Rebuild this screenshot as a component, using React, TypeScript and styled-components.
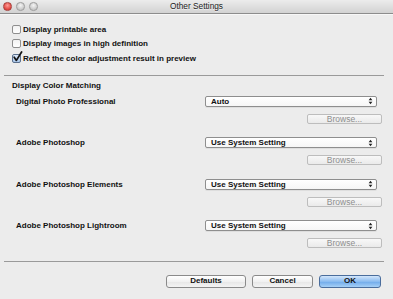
import styled, { createGlobalStyle } from "styled-components";

const GlobalStyle = createGlobalStyle`
    html, body {
        margin: 0;
        padding: 0;
        background: #ececec;
    }
    body {
        font-family: "Liberation Sans", Arial, sans-serif;
        color: #111;
    }
`;

interface ProfileGroup {
    label: string;
    value: string;
}

const checkOptions = [
    { text: "Display printable area", checked: false },
    { text: "Display images in high definition", checked: false },
    { text: "Reflect the color adjustment result in preview", checked: true },
];

const groups: ProfileGroup[] = [
    { label: "Digital Photo Professional", value: "Auto" },
    { label: "Adobe Photoshop", value: "Use System Setting" },
    { label: "Adobe Photoshop Elements", value: "Use System Setting" },
    { label: "Adobe Photoshop Lightroom", value: "Use System Setting" },
];

const PopupArrows = () => (
    <svg width="5" height="8" viewBox="0 0 5 8">
        <path d="M2.5 0.8 L4.4 3.2 L0.6 3.2 Z" fill="#222" />
        <path d="M2.5 7.2 L4.4 4.8 L0.6 4.8 Z" fill="#222" />
    </svg>
);

const CheckMark = () => (
    <svg width="11" height="12" viewBox="0 0 11 12">
        <path d="M2.2 6.2 L4.4 9.4 L9.6 1" fill="none" stroke="#111" strokeWidth="1.7" strokeLinecap="round" strokeLinejoin="round" />
    </svg>
);

const App = () => {
    return (
        <Window>
            <GlobalStyle />
            <TitleBar>
                <Lights>
                    <Light color="red" />
                    <Light />
                    <Light />
                </Lights>
                <Title>Other Settings</Title>
            </TitleBar>
            <Body>
                <CheckList>
                    {checkOptions.map((item) => (
                        <CheckRow key={item.text}>
                            <CheckBox checked={item.checked}>
                                {item.checked && <CheckMark />}
                            </CheckBox>
                            <Label>{item.text}</Label>
                        </CheckRow>
                    ))}
                </CheckList>
                <Divider />
                <Heading>Display Color Matching</Heading>
                <Groups>
                    {groups.map((group) => (
                        <Group key={group.label}>
                            <GroupRow>
                                <GroupLabel>{group.label}</GroupLabel>
                                <Popup>
                                    <span>{group.value}</span>
                                    <PopupArrows />
                                </Popup>
                            </GroupRow>
                            <BrowseRow>
                                <BrowseButton disabled>Browse...</BrowseButton>
                            </BrowseRow>
                        </Group>
                    ))}
                </Groups>
                <Divider />
                <Footer>
                    <PushButton width={80}>Defaults</PushButton>
                    <PushButton width={61}>Cancel</PushButton>
                    <PushButton width={62} primary>OK</PushButton>
                </Footer>
            </Body>
        </Window>
    );
};

const Window = styled.div`
    width: 393px;
    height: 299px;
    background: #ececec;
    display: flex;
    flex-direction: column;
    overflow: hidden;
`;

const TitleBar = styled.div`
    position: relative;
    height: 13px;
    display: flex;
    align-items: center;
    justify-content: center;
    background: linear-gradient(#ececec, #d2d2d2);
    border-bottom: 1px solid #8c8c8c;
    box-shadow: 0 1px 0 #f7f7f7;
`;

const Lights = styled.div`
    position: absolute;
    left: 3px;
    top: 2px;
    display: flex;
    gap: 4.5px;
`;

const Light = styled.div<{ color?: string }>`
    width: 8.5px;
    height: 8.5px;
    border-radius: 50%;
    box-sizing: border-box;
    border: 1px solid ${({ color }) => (color === "red" ? "#a6403c" : "#9c9c9c")};
    background: ${({ color }) =>
        color === "red"
            ? "radial-gradient(circle at 50% 35%, #ff9c95, #e0443e 70%)"
            : "radial-gradient(circle at 50% 35%, #f4f4f4, #c9c9c9 70%)"};
`;

const Title = styled.div`
    font-size: 8.3px;
    color: #222;
    line-height: 13px;
    text-shadow: 0 1px 0 rgba(255, 255, 255, 0.6);
`;

const Body = styled.div`
    display: flex;
    flex-direction: column;
    padding: 8px 9px 0 4px;
`;

const CheckList = styled.div`
    display: flex;
    flex-direction: column;
    padding-left: 8px;
    margin-bottom: 9px;
`;

const CheckRow = styled.div`
    display: flex;
    align-items: center;
    height: 14.5px;
    gap: 2px;
`;

const CheckBox = styled.div<{ checked: boolean }>`
    position: relative;
    width: 9px;
    height: 9px;
    box-sizing: border-box;
    border: 1px solid ${({ checked }) => (checked ? "#5a6f8c" : "#8f8f8f")};
    border-radius: 2px;
    background: ${({ checked }) =>
        checked ? "linear-gradient(#dbe8f8, #a9c6ea)" : "linear-gradient(#f2f2f2, #ffffff)"};
    flex-shrink: 0;

    svg {
        position: absolute;
        left: -1px;
        top: -4px;
    }
`;

const Label = styled.span`
    font-size: 8px;
    font-weight: bold;
    white-space: nowrap;
`;

const Divider = styled.div`
    height: 1px;
    background: #9a9a9a;
`;

const Heading = styled.div`
    font-size: 8px;
    font-weight: bold;
    line-height: 12px;
    padding-left: 8px;
    margin-top: 4px;
    margin-bottom: 4px;
`;

const Groups = styled.div`
    display: flex;
    flex-direction: column;
    gap: 13.5px;
    margin-bottom: 13px;
`;

const Group = styled.div`
    display: flex;
    flex-direction: column;
    gap: 7px;
`;

const GroupRow = styled.div`
    display: flex;
    align-items: center;
    height: 11px;
`;

const GroupLabel = styled.span`
    width: 201px;
    padding-left: 12px;
    box-sizing: border-box;
    font-size: 8px;
    font-weight: bold;
    white-space: nowrap;
`;

const Popup = styled.div`
    width: 172px;
    height: 11px;
    box-sizing: border-box;
    display: flex;
    align-items: center;
    justify-content: space-between;
    padding: 0 3px 0 5px;
    background: linear-gradient(#ffffff, #f6f6f6);
    border: 1px solid #8e8e8e;
    border-radius: 2px;
    box-shadow: inset 0 1px 0 #ffffff, 0 1px 0 rgba(0, 0, 0, 0.06);
    font-size: 8px;
    font-weight: bold;
`;

const BrowseRow = styled.div`
    display: flex;
    justify-content: flex-end;
    padding-right: 2px;
`;

const BrowseButton = styled.button`
    width: 75px;
    height: 10px;
    box-sizing: border-box;
    padding: 0;
    border: 1px solid #bdbdbd;
    border-radius: 2px;
    background: linear-gradient(#f8f8f8, #eaeaea);
    font-family: "Liberation Sans", Arial, sans-serif;
    font-size: 8.5px;
    line-height: 8px;
    color: #8e8e8e;
`;

const Footer = styled.div`
    display: flex;
    justify-content: flex-end;
    gap: 6px;
    margin-top: 13px;
    padding-right: 3px;
`;

const PushButton = styled.button<{ width: number; primary?: boolean }>`
    width: ${({ width }) => width}px;
    height: 12.5px;
    box-sizing: border-box;
    padding: 0;
    border: 1px solid ${({ primary }) => (primary ? "#4a6d9c" : "#8a8a8a")};
    border-radius: 3px;
    background: ${({ primary }) =>
        primary
            ? "linear-gradient(#d3e6fb, #8bbcf0 50%, #6ea9ea 51%, #a6d0f7)"
            : "linear-gradient(#ffffff, #f1f1f1 50%, #e6e6e6 51%, #f4f4f4)"};
    font-family: "Liberation Sans", Arial, sans-serif;
    font-size: 8px;
    font-weight: bold;
    line-height: 10px;
    color: #111;
`;

export default App;
